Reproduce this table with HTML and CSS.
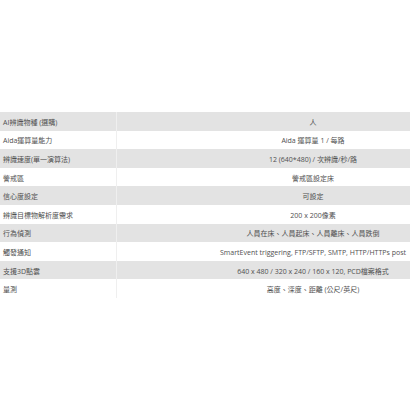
FILE: index.html
```html
<!DOCTYPE html>
<html lang="zh-Hant">
<head>
<meta charset="utf-8">
<link rel="stylesheet" href="styles.css">
</head>
<body>
<div class="page">
  <table class="spec">
    <tbody>
      <tr><td class="k">AI辨識物種 (選購)</td><td class="v">人</td></tr>
      <tr><td class="k">Aida運算量能力</td><td class="v">Aida 運算量 1 / 每路</td></tr>
      <tr><td class="k">辨識速度(單一演算法)</td><td class="v">12 (640*480) / 次辨識/秒/路</td></tr>
      <tr><td class="k">警戒區</td><td class="v">警戒區設定床</td></tr>
      <tr><td class="k">信心度設定</td><td class="v">可設定</td></tr>
      <tr><td class="k">辨識目標物解析度需求</td><td class="v">200 x 200像素</td></tr>
      <tr><td class="k">行為偵測</td><td class="v">人員在床、人員起床、人員離床、人員跌倒</td></tr>
      <tr><td class="k">觸發通知</td><td class="v">SmartEvent triggering, FTP/SFTP, SMTP, HTTP/HTTPs post</td></tr>
      <tr><td class="k">支援3D點雲</td><td class="v">640 x 480 / 320 x 240 / 160 x 120, PCD檔案格式</td></tr>
      <tr><td class="k">量測</td><td class="v">高度、深度、距離 (公尺/英尺)</td></tr>
    </tbody>
  </table>
</div>
</body>
</html>
```

FILE: styles.css
```css
html, body {
  margin: 0;
  padding: 0;
  background: #ffffff;
  overflow: hidden;
}
.page {
  width: 410px;
  height: 410px;
  overflow: hidden;
  padding-top: 112px;
  box-sizing: border-box;
}
.spec {
  width: 509px;
  border-collapse: collapse;
  border-spacing: 0;
  table-layout: fixed;
  font-family: "Open Sans", "Noto Sans CJK TC", sans-serif;
  font-size: 7px;
  color: #505050;
}
.spec tr {
  height: 18.6px;
}
.spec tr:nth-child(odd) td {
  background: #e3e3e3;
}
.spec td {
  padding: 2px 3px 0;
  line-height: 1;
  vertical-align: middle;
  white-space: nowrap;
}
.spec td.k {
  width: 110px;
  text-align: left;
}
.spec td.v {
  text-align: center;
  border-left: 1px solid #efefef;
}
```
